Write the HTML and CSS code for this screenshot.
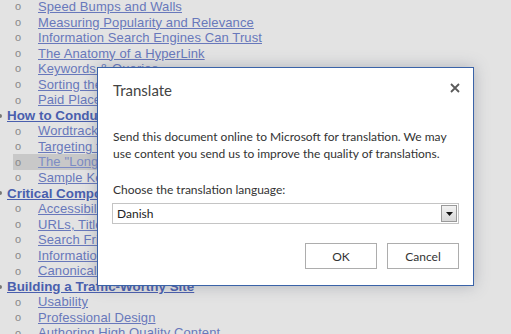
FILE: index.html
```html
<!DOCTYPE html>
<html>
<head>
<meta charset="utf-8">
<link rel="stylesheet" href="styles.css">
</head>
<body>
<div class="page">
  <ul class="toc">
    <li class="sub"><span class="dot">o</span><a href="#">Speed Bumps and Walls</a></li>
    <li class="sub"><span class="dot">o</span><a href="#">Measuring Popularity and Relevance</a></li>
    <li class="sub"><span class="dot">o</span><a href="#">Information Search Engines Can Trust</a></li>
    <li class="sub"><span class="dot">o</span><a href="#">The Anatomy of a HyperLink</a></li>
    <li class="sub"><span class="dot">o</span><a href="#">Keywords &amp; Queries</a></li>
    <li class="sub"><span class="dot">o</span><a href="#">Sorting the Results</a></li>
    <li class="sub"><span class="dot">o</span><a href="#">Paid Placement</a></li>
    <li class="top"><span class="disc"></span><a href="#">How to Conduct Keyword Research</a></li>
    <li class="sub"><span class="dot">o</span><a href="#">Wordtracker</a></li>
    <li class="sub"><span class="dot">o</span><a href="#">Targeting the Right Terms</a></li>
    <li class="sub hl"><span class="dot">o</span><a href="#">The "Long Tail" of Search</a></li>
    <li class="sub"><span class="dot">o</span><a href="#">Sample Keyword Research</a></li>
    <li class="top"><span class="disc"></span><a href="#">Critical Components of Optimizing a Site</a></li>
    <li class="sub"><span class="dot">o</span><a href="#">Accessibility</a></li>
    <li class="sub"><span class="dot">o</span><a href="#">URLs, Title Tags and Meta Data</a></li>
    <li class="sub"><span class="dot">o</span><a href="#">Search Friendly Text</a></li>
    <li class="sub"><span class="dot">o</span><a href="#">Information Architecture</a></li>
    <li class="sub"><span class="dot">o</span><a href="#">Canonical Issues</a></li>
    <li class="top"><span class="disc"></span><a href="#">Building a Traffic-Worthy Site</a></li>
    <li class="sub"><span class="dot">o</span><a href="#">Usability</a></li>
    <li class="sub"><span class="dot">o</span><a href="#">Professional Design</a></li>
    <li class="sub"><span class="dot">o</span><a href="#">Authoring High Quality Content</a></li>
  </ul>
</div>

<div class="dialog">
  <div class="dialog-head">
    <h1 class="dialog-title">Translate</h1>
    <button class="close" type="button" aria-label="Close">
      <svg width="10" height="10" viewBox="0 0 10 10"><path d="M1 1 L9 9 M9 1 L1 9" stroke="#5a5a5a" stroke-width="1.8" fill="none"/></svg>
    </button>
  </div>
  <p class="dialog-text">Send this document online to Microsoft for translation. We may use content you send us to improve the quality of translations.</p>
  <label class="dialog-label">Choose the translation language:</label>
  <div class="select">
    <span class="select-value">Danish</span>
    <span class="select-btn"><svg width="7" height="4" viewBox="0 0 7 4"><path d="M0 0 H7 L3.5 4 Z" fill="#111"/></svg></span>
  </div>
  <div class="actions">
    <button class="btn" type="button">OK</button>
    <button class="btn" type="button">Cancel</button>
  </div>
</div>
</body>
</html>
```

FILE: styles.css
```css
html, body {
  margin: 0;
  padding: 0;
  background: #e3e3e3;
  overflow: hidden;
  height: 100%;
}

.page {
  margin-top: -1px;
}

.toc {
  list-style: none;
  margin: 0;
  padding: 0;
  font-family: "Liberation Sans", Arial, sans-serif;
  font-size: 13px;
  line-height: 15.55px;
}

.toc li {
  display: flex;
  align-items: center;
  white-space: nowrap;
}

.toc a {
  color: #6878bb;
  text-decoration: underline;
  letter-spacing: 0.1px;
}

.toc .top a {
  color: #4a5fae;
  font-weight: bold;
  font-size: 13.4px;
  letter-spacing: 0;
}

.sub {
  padding-left: 15px;
}

.sub.hl {
  margin-left: 13px;
  padding-left: 2px;
  padding-right: 8px;
  width: fit-content;
  background: #c8c8c8;
}

.sub.hl a {
  color: #7d8cc4;
}

.dot {
  width: 23px;
  font-size: 11px;
  color: #888;
  line-height: 1;
}

.top {
  padding-left: 0;
}

.disc {
  width: 4px;
  height: 4px;
  margin-left: -2px;
  margin-right: 5px;
  background: #777;
  border-radius: 50%;
}

/* Dialog */
.dialog {
  position: absolute;
  left: 97px;
  top: 67px;
  height: 217px;
  box-sizing: content-box;
  border: 1px solid #3a63a8;
  background: #fff;
  box-shadow: 0 0 14px rgba(80, 90, 110, 0.35);
  font-family: "Lato", "Noto Sans", sans-serif;
  color: #333;
  display: flex;
  flex-direction: column;
  padding: 0 14px 0 15px;
  width: 346px;
}

.dialog-head {
  display: flex;
  align-items: center;
  justify-content: space-between;
  height: 40px;
}

.dialog-title {
  margin: 0;
  font-weight: normal;
  font-size: 15px;
  color: #444;
  padding-top: 3px;
}

.close {
  border: 0;
  background: none;
  padding: 0;
  margin-right: -1px;
  margin-top: 0;
  display: flex;
}

.dialog-text {
  margin: 20px 0 0;
  font-size: 12px;
  line-height: 17px;
  color: #333;
}

.dialog-label {
  margin-top: 19px;
  font-size: 12px;
  line-height: 17px;
  color: #333;
}

.select {
  margin-top: 5px;
  margin-left: -1px;
  height: 19px;
  border: 1px solid #c4c4c4;
  display: flex;
  align-items: center;
  justify-content: space-between;
  font-size: 12px;
  color: #222;
}

.select-value {
  padding-left: 4px;
}

.select-btn {
  width: 14px;
  height: 15px;
  margin-right: 1px;
  border: 1px solid #9a9a9a;
  background: linear-gradient(#f2f2f2, #d8d8d8);
  display: flex;
  align-items: center;
  justify-content: center;
}

.actions {
  margin-top: 19px;
  display: flex;
  justify-content: flex-end;
  gap: 10px;
}

.btn {
  width: 72px;
  height: 26px;
  border: 1px solid #adadad;
  background: #fff;
  font-family: "Lato", "Noto Sans", sans-serif;
  font-size: 12px;
  color: #333;
  padding: 0;
}
```
